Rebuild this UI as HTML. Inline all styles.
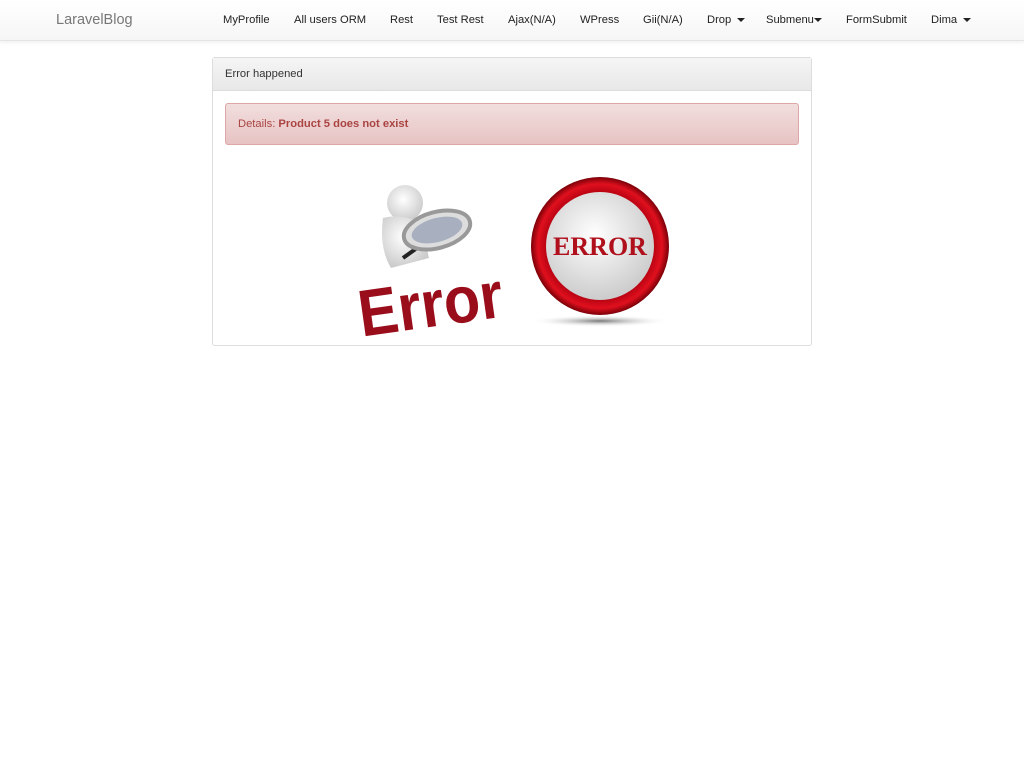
<!DOCTYPE html>
<html><head><meta charset="utf-8"><style>
body{margin:0;font-family:"Liberation Sans",Arial,sans-serif;font-size:11.2px;color:#333;background:#fff}
.nav{position:absolute;left:0;top:0;width:1024px;height:40px;background:linear-gradient(#fff,#f6f6f6);border-bottom:1px solid #e4e4e4;box-shadow:0 1px 4px rgba(0,0,0,.08)}
.nav span{position:absolute;top:14px;color:#222;white-space:nowrap}
.brand{font-size:14.5px;color:#777!important;top:12px!important}
.caret{display:inline-block;width:0;height:0;border-left:4px solid transparent;border-right:4px solid transparent;border-top:4px solid #222;vertical-align:middle;margin-left:3px}
.panel{position:absolute;left:212px;top:57px;width:598px;height:287px;border:1px solid #ddd;border-radius:3px}
.ph{height:32px;background:linear-gradient(#f5f5f5,#e8e8e8);border-bottom:1px solid #ddd;padding-left:12px;line-height:33px;color:#333}
.alert{position:absolute;left:12px;top:45px;height:42px;border:1px solid #dca7a7;border-radius:3px;background:linear-gradient(#f2dede,#e7c3c3);color:#a94442;line-height:41px;padding-left:12px;box-sizing:border-box;width:574px}
</style></head><body>
<div class="nav">
<span class="brand" style="left:56px">LaravelBlog</span>
<span style="left:223px">MyProfile</span>
<span style="left:294px">All users ORM</span>
<span style="left:390px">Rest</span>
<span style="left:437px">Test Rest</span>
<span style="left:508px">Ajax(N/A)</span>
<span style="left:580px">WPress</span>
<span style="left:643px">Gii(N/A)</span>
<span style="left:707px">Drop <i class="caret"></i></span>
<span style="left:766px">Submenu<i class="caret" style="margin-left:0"></i></span>
<span style="left:846px">FormSubmit</span>
<span style="left:931px">Dima <i class="caret"></i></span>
</div>
<div class="panel">
<div class="ph">Error happened</div>
<div class="alert">Details: <b>Product 5 does not exist</b></div>
<svg style="position:absolute;left:128px;top:100px" width="360" height="180" viewBox="0 0 360 180">
<defs>
<radialGradient id="w" cx="45%" cy="40%" r="60%"><stop offset="0" stop-color="#fff"/><stop offset="1" stop-color="#ccc"/></radialGradient>
<radialGradient id="r" cx="50%" cy="50%" r="50%"><stop offset=".75" stop-color="#b00010"/><stop offset=".9" stop-color="#e0101e"/><stop offset="1" stop-color="#7a0008"/></radialGradient>
<radialGradient id="s" cx="50%" cy="50%" r="50%"><stop offset="0" stop-color="#777"/><stop offset="1" stop-color="#fff" stop-opacity="0"/></radialGradient>
</defs>
<circle cx="64" cy="45" r="18" fill="url(#w)"/>
<path d="M42 60 Q60 55 80 65 L88 100 L50 110 Q38 90 42 60Z" fill="url(#w)"/>
<line x1="62" y1="100" x2="90" y2="80" stroke="#222" stroke-width="4"/>
<ellipse cx="96" cy="72" rx="34" ry="18" fill="#ddd" stroke="#999" stroke-width="4" transform="rotate(-15 96 72)"/>
<ellipse cx="96" cy="72" rx="26" ry="12" fill="#a8b0c0" transform="rotate(-15 96 72)"/>
<text x="16" y="170" font-family="Liberation Sans Narrow,Liberation Sans" font-weight="bold" font-size="66" fill="#9a0d1a" textLength="145" lengthAdjust="spacingAndGlyphs" transform="rotate(-8 80 140)">Error</text>
<ellipse cx="259" cy="163" rx="70" ry="6" fill="url(#s)"/>
<circle cx="259" cy="88" r="69" fill="url(#r)"/>
<circle cx="259" cy="88" r="54" fill="url(#w)"/>
<text x="259" y="97" text-anchor="middle" font-family="Liberation Serif" font-weight="bold" font-size="26" fill="#b0101c">ERROR</text>
</svg>
</div>
</body></html>
